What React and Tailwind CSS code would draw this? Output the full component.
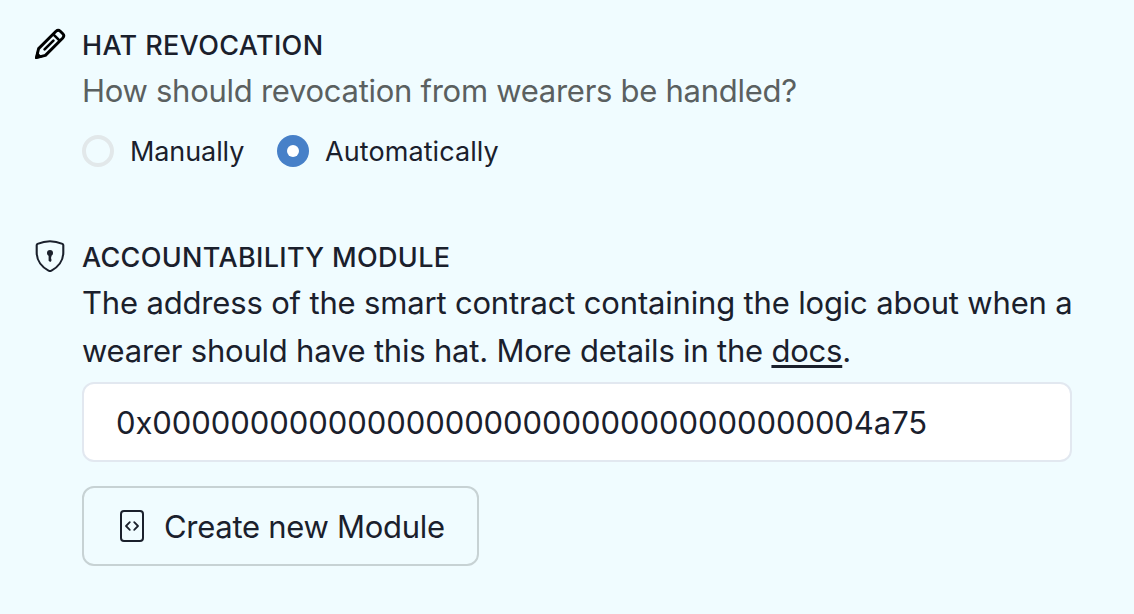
import React from "react";

function PencilIcon() {
  return (
    <svg className="block h-8 w-8" viewBox="0 0 32 32" fill="none" stroke="#000" strokeWidth="2.9" strokeLinejoin="round">
      <path d="M2.4 29.6 4.6 20.6 22 3.2Q24.2 1.2 26.3 3.2L28.8 5.7Q30.8 7.8 28.8 10L11.4 27.4Z" />
      <path d="M19.1 6.1 25.9 12.9" strokeWidth="2.6" />
      <path d="M10.6 21.4 19.4 12.6" strokeWidth="2.7" strokeLinecap="round" />
      <path d="M1 31 2.8 23.5 8.5 29.2Z" fill="#000" stroke="none" />
    </svg>
  );
}

function ShieldIcon() {
  return (
    <svg className="block h-8 w-8" viewBox="0 0 32 32" fill="none" stroke="#1a202c" strokeWidth="2.1" strokeLinejoin="round">
      <path d="M16 1.2C12 1.2 7.5 2.2 3.5 3.9Q2.7 4.3 2.7 5.3V12.5C2.7 20.8 8.2 27.3 14.5 30.6Q16 31.4 17.5 30.6C23.8 27.3 29.3 20.8 29.3 12.5V5.3Q29.3 4.3 28.5 3.9C24.5 2.2 20 1.2 16 1.2Z" />
      <circle cx="16" cy="13" r="3" fill="#1a202c" stroke="none" />
      <path d="M14.6 14H17.4V17L16.9 18 17.4 19V21L16.2 22 14.6 20.8Z" fill="#1a202c" stroke="none" />
    </svg>
  );
}

function CodeFileIcon() {
  return (
    <svg className="block h-8 w-6" viewBox="0 0 24 32" fill="none" stroke="#1a202c" strokeWidth="2" strokeLinecap="round" strokeLinejoin="round">
      <rect x="1" y="1" width="22" height="30" rx="3" />
      <path d="M9.8 12.2 6 16 9.8 19.8M14.2 12.2 18 16 14.2 19.8" strokeWidth="1.8" />
    </svg>
  );
}

export default function App() {
  return (
    <main className="h-[614px] w-[1134px] overflow-hidden bg-[#f0fcff] pt-[22px] pr-[62px] pl-[34px] font-['Inter',sans-serif] text-[#1a202c]">
      <section className="flex gap-4">
        <div className="pt-[6px]"><PencilIcon /></div>
        <div className="whitespace-nowrap">
          <h2 className="h-[45px] text-[27px] leading-[48px] font-medium tracking-[0.35px]"><span>HAT REVOCATION</span></h2>
          <p className="h-12 text-[31px] leading-[48px] tracking-[-0.28px] text-[#5a6060]"><span>How should revocation from wearers be handled?</span></p>
          <div className="mt-3 flex h-12 items-center text-[27px]">
            <span className="h-8 w-8 rounded-full border-4 border-[#e2e8ea]" />
            <span className="ml-4 w-[147px] pt-[3px] tracking-[-0.1px]"><span>Manually</span></span>
            <span className="flex h-8 w-8 items-center justify-center rounded-full bg-[#4780c8]">
              <span className="h-3 w-3 rounded-full bg-white" />
            </span>
            <span className="ml-4 pt-[3px] tracking-[0.08px]"><span>Automatically</span></span>
          </div>
        </div>
      </section>
      <section className="mt-[59px] flex gap-4">
        <div className="pt-[6px]"><ShieldIcon /></div>
        <div className="w-[990px] whitespace-nowrap">
          <h2 className="h-[45px] text-[27px] leading-[48px] font-medium tracking-[0.33px]"><span>ACCOUNTABILITY MODULE</span></h2>
          <p className="text-[31px] leading-[48px] tracking-[-0.17px]">
            <span>The address of the smart contract containing the logic about when a</span><br />
            <span className="tracking-[-0.21px]">wearer should have this hat. More details in the <a className="underline decoration-[3px] underline-offset-[3px]">docs</a>.</span>
          </p>
          <div className="mt-[7px] flex h-20 items-center rounded-xl border-2 border-[#e2e8f0] bg-white px-8 pt-[2px] text-[31px] tracking-[-0.07px]">
            <span>0x0000000000000000000000000000000000004a75</span>
          </div>
          <button className="mt-6 flex h-20 w-[397px] items-center rounded-xl border-2 border-[#c7d2d4] pl-9 text-[31px] tracking-[-0.28px]">
            <CodeFileIcon />
            <span className="ml-5 pt-[2px]">Create new Module</span>
          </button>
        </div>
      </section>
    </main>
  );
}
